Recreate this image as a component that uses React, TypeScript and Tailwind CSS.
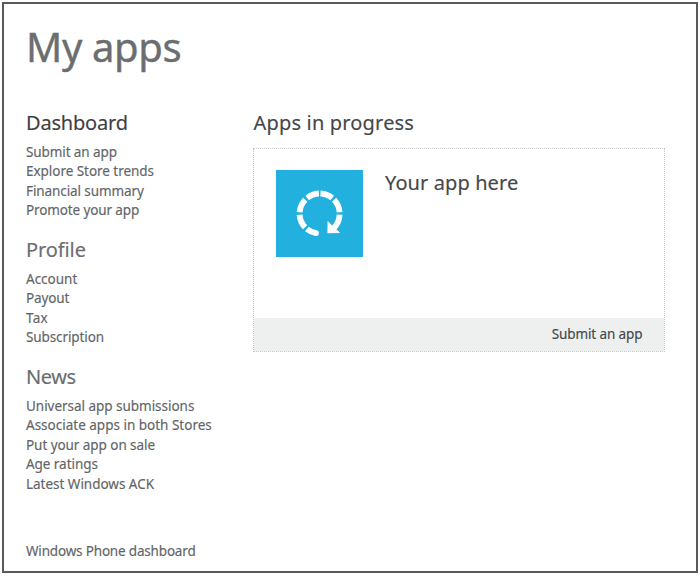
type Group = { title: string; color: string; spacing: string; links: { label: string; spacing: string }[] };

const groups: Group[] = [
  {
    title: "Dashboard",
    color: "text-[#3f4041]",
    spacing: "tracking-[-0.2px]",
    links: [
      { label: "Submit an app", spacing: "tracking-[-0.1px]" },
      { label: "Explore Store trends", spacing: "tracking-[-0.04px]" },
      { label: "Financial summary", spacing: "tracking-[-0.1px]" },
      { label: "Promote your app", spacing: "tracking-[-0.12px]" },
    ],
  },
  {
    title: "Profile",
    color: "text-[#6b6e70]",
    spacing: "tracking-[-0.1px]",
    links: [
      { label: "Account", spacing: "tracking-[0px]" },
      { label: "Payout", spacing: "tracking-[-0.15px]" },
      { label: "Tax", spacing: "tracking-[0.3px]" },
      { label: "Subscription", spacing: "tracking-[-0.1px]" },
    ],
  },
  {
    title: "News",
    color: "text-[#6b6e70]",
    spacing: "tracking-[-0.4px]",
    links: [
      { label: "Universal app submissions", spacing: "tracking-[-0.03px]" },
      { label: "Associate apps in both Stores", spacing: "tracking-[0px]" },
      { label: "Put your app on sale", spacing: "tracking-[-0.06px]" },
      { label: "Age ratings", spacing: "tracking-[-0.05px]" },
      { label: "Latest Windows ACK", spacing: "tracking-[-0.02px]" },
    ],
  },
];

function ProgressIcon() {
  return (
    <svg viewBox="0 0 87 87" className="h-[87px] w-[87px]" fill="none">
      <g stroke="#fff" strokeWidth="5.8">
        <path d="M42.9 23.5A20 20 0 0 0 31.2 28" />
        <path d="M29.3 29.7A20 20 0 0 0 23.6 42.3" />
        <path d="M23.6 44.7A20 20 0 0 0 29.1 57.3" />
        <path d="M44.5 23.5A20 20 0 0 1 56.2 28" />
        <path d="M58.1 29.7A20 20 0 0 1 63.6 42.3" />
        <path d="M63.6 44.7A20 20 0 0 1 57.6 58.3" />
      </g>
      <path d="M30.9 59A20 20 0 0 0 40 63.1" stroke="#fff" strokeWidth="5.8" />
      <circle cx="40" cy="63.1" r="2.9" fill="#fff" />
      <path d="M51.6 51L51.4 63.3L64.2 62.9L60.8 59.8L55.6 55Z" fill="#fff" />
    </svg>
  );
}

export default function App() {
  return (
    <div className="h-[576px] w-[700px] bg-white pl-[2px] pt-[2px] font-['Noto_Sans',sans-serif] [-webkit-text-stroke:0.15px]">
      <div className="h-[571px] w-[696px] border-2 border-[#58595a] pl-[22px]">
        <h1 className="h-[106px] whitespace-nowrap pt-[16px] text-[40px] leading-[54px] tracking-[-0.35px] text-[#6b6e70] [-webkit-text-stroke:0.4px]">
          My apps
        </h1>
        <div className="flex">
          <nav className="flex w-[227px] flex-col">
            {groups.map((g) => (
              <section key={g.title} className="flex flex-col pb-[16.5px] last-of-type:pb-0">
                <h2 className={`mb-[7.5px] text-[20px] leading-[25px] ${g.color} ${g.spacing}`}>{g.title}</h2>
                <ul>
                  {g.links.map((l) => (
                    <li key={l.label} className={`h-[19.5px] whitespace-nowrap text-[13.5px] leading-[19.5px] text-[#626567] ${l.spacing}`}>
                      {l.label}
                    </li>
                  ))}
                </ul>
              </section>
            ))}
            <p className="mt-[47px] whitespace-nowrap text-[13.5px] leading-[20px] tracking-[-0.18px] text-[#626567]">
              Windows Phone dashboard
            </p>
          </nav>
          <main className="w-[412px]">
            <h2 className="pl-[0.5px] text-[20px] leading-[25px] tracking-[0.18px] text-[#454748]">Apps in progress</h2>
            <div className="mt-[13px] flex h-[204px] flex-col border border-dotted border-[#c5c8c8]">
              <div className="flex flex-1 gap-[22px] pl-[22px] pt-[21px]">
                <div className="h-[87px] w-[87px] bg-[#22b1de]">
                  <ProgressIcon />
                </div>
                <h3 className="text-[20px] leading-[25px] tracking-[0.1px] text-[#454748]">Your app here</h3>
              </div>
              <div className="flex h-[33px] items-center justify-end bg-[#edf0ef] pb-[2px] pr-[21.5px] text-[13.5px] leading-[20px] tracking-[-0.1px] text-[#454748]">
                Submit an app
              </div>
            </div>
          </main>
        </div>
      </div>
    </div>
  );
}
